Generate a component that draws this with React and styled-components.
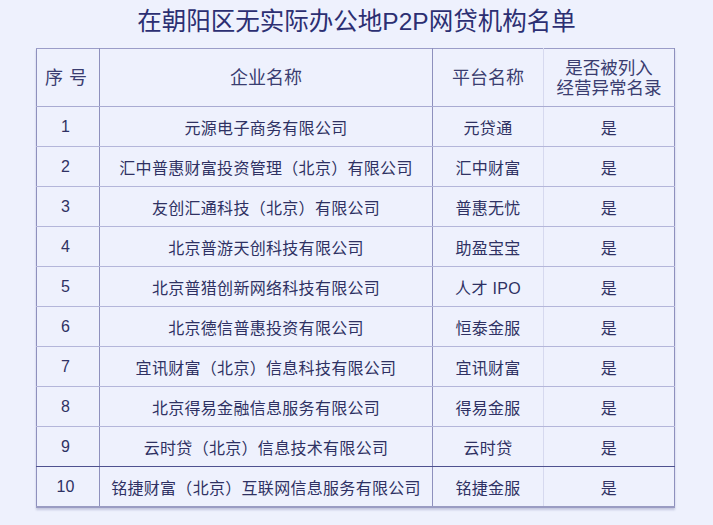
import React from "react"
import styled, { createGlobalStyle } from "styled-components"

const GlobalStyle = createGlobalStyle`
  html, body {
    margin: 0;
    padding: 0;
    background: #eef1fd;
  }
  body {
    font-family: "Liberation Sans", "Noto Sans CJK SC", sans-serif;
    color: #2f3163;
  }
`

const Page = styled.div`
  width: 713px;
  height: 525px;
  box-sizing: border-box;
  padding-top: 7px;
  background: #eef1fd;
`

const Title = styled.h1`
  margin: 0;
  height: 41px;
  text-align: center;
  font-size: 24.5px;
  font-weight: 400;
  line-height: 30px;
  color: #2c2f72;
`

const Table = styled.table`
  margin-left: 36px;
  width: 638px;
  border-collapse: collapse;
  table-layout: fixed;
  border-top: 1px solid #9b9dc8;
  border-left: 1px solid #8e90bd;
  border-right: 1px solid #8e90bd;
  border-bottom: 2px solid #9a9cc3;
  box-shadow: 0 2px 2px rgba(120, 122, 170, 0.35);
`

const Th = styled.th`
  height: 57px;
  padding: 0;
  font-weight: 400;
  font-size: 18px;
  line-height: 20px;
  color: #3a3d70;
  text-align: center;
  border-bottom: 1px solid #a9abd2;
  border-right: 1px solid ${(p) => (p.$light ? "#d6d9ef" : "#8e90bd")};
  letter-spacing: ${(p) => (p.$spaced ? "6px" : "0")};
  padding-left: ${(p) => (p.$spaced ? "2px" : "0")};
`

const HeadLine = styled.span`
  display: block;
  font-size: 17.5px;
`

const Td = styled.td`
  height: 39px;
  padding: 0 ${(p) => (p.$num ? "5px" : "0")} 0 0;
  font-size: 16px;
  letter-spacing: ${(p) => (p.$num ? "0" : "0.3px")};
  color: #2f3163;
  text-align: center;
  white-space: nowrap;
  border-bottom: 1px solid ${(p) => (p.$dark ? "#4f5290" : "#b4b6da")};
  border-right: 1px solid ${(p) => (p.$light ? "#d6d9ef" : "#8e90bd")};
`

const rows = [
  ["1", "元源电子商务有限公司", "元贷通"],
  ["2", "汇中普惠财富投资管理（北京）有限公司", "汇中财富"],
  ["3", "友创汇通科技（北京）有限公司", "普惠无忧"],
  ["4", "北京普游天创科技有限公司", "助盈宝宝"],
  ["5", "北京普猎创新网络科技有限公司", "人才 IPO"],
  ["6", "北京德信普惠投资有限公司", "恒泰金服"],
  ["7", "宜讯财富（北京）信息科技有限公司", "宜讯财富"],
  ["8", "北京得易金融信息服务有限公司", "得易金服"],
  ["9", "云时贷（北京）信息技术有限公司", "云时贷"],
  ["10", "铭捷财富（北京）互联网信息服务有限公司", "铭捷金服"],
]

export default function App() {
  return (
    <Page>
      <GlobalStyle />
      <Title>在朝阳区无实际办公地P2P网贷机构名单</Title>
      <Table>
        <colgroup>
          <col style={{ width: 63 }} />
          <col style={{ width: 333 }} />
          <col style={{ width: 111 }} />
          <col style={{ width: 131 }} />
        </colgroup>
        <thead>
          <tr>
            <Th $spaced>序号</Th>
            <Th>企业名称</Th>
            <Th $light>平台名称</Th>
            <Th>
              <HeadLine>是否被列入</HeadLine>
              <HeadLine>经营异常名录</HeadLine>
            </Th>
          </tr>
        </thead>
        <tbody>
          {rows.map((r, i) => (
            <tr key={r[0]}>
              <Td $num $dark={i === 8}>{r[0]}</Td>
              <Td $dark={i === 8}>{r[1]}</Td>
              <Td $dark={i === 8} $light>{r[2]}</Td>
              <Td $dark={i === 8}>是</Td>
            </tr>
          ))}
        </tbody>
      </Table>
    </Page>
  )
}
